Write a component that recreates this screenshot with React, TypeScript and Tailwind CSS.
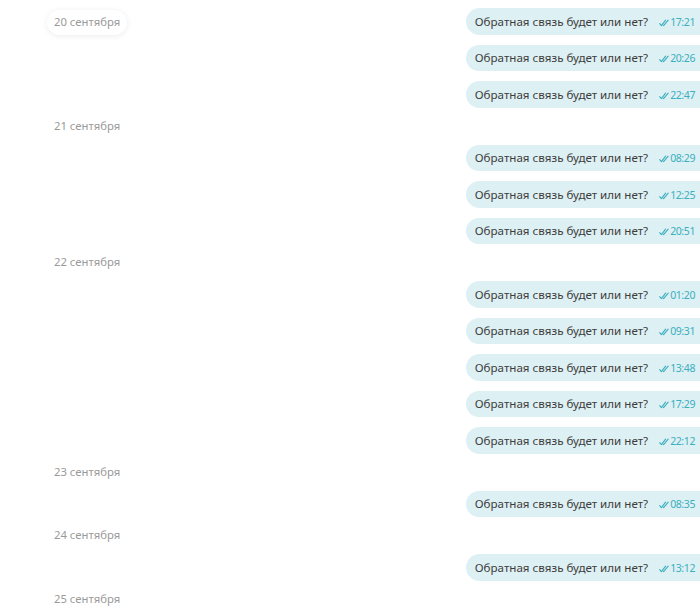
const days = [
  { date: "20 сентября", times: ["17:21", "20:26", "22:47"] },
  { date: "21 сентября", times: ["08:29", "12:25", "20:51"] },
  { date: "22 сентября", times: ["01:20", "09:31", "13:48", "17:29", "22:12"] },
  { date: "23 сентября", times: ["08:35"] },
  { date: "24 сентября", times: ["13:12"] },
  { date: "25 сентября", times: [] as string[] },
];

function Checks() {
  return (
    <svg width="10" height="8" viewBox="0 0 10 8" fill="none" className="shrink-0">
      <path d="M0.7 4.6 L2.4 6.6 L6.6 1.2" stroke="currentColor" strokeWidth="1.1" strokeLinecap="round" strokeLinejoin="round" />
      <path d="M4.3 6.4 L4.6 6.6 L9.2 1.2" stroke="currentColor" strokeWidth="1.1" strokeLinecap="round" strokeLinejoin="round" />
    </svg>
  );
}

function Message({ time }: { time: string }) {
  return (
    <div className="self-end flex items-center h-[26.5px] rounded-l-full bg-[#ddf0f3] pl-[9px] pr-[5px]">
      <span className="text-[11.6px] text-[#3d3d3d]">Обратная связь будет или нет?</span>
      <span className="ml-[11px] mt-[3px] flex items-center gap-[1px] text-[10.5px] text-[#3aafc0] tracking-[-0.4px]">
        <Checks />
        {time}
      </span>
    </div>
  );
}

export default function App() {
  return (
    <div className="relative w-[700px] h-[608px] overflow-hidden bg-white font-['Noto_Sans',sans-serif]">
      <div className="flex flex-col gap-[10px] pt-[8px]">
        {days.map((day, i) => (
          <div key={day.date} className="contents">
            {i > 0 && (
              <div className="h-[17px] flex items-center pl-[54px] text-[11.3px] text-[#9a9a9a]">{day.date}</div>
            )}
            {day.times.map((t) => (
              <Message key={t} time={t} />
            ))}
          </div>
        ))}
      </div>
      <div className="absolute left-[47px] top-[10px] h-[25px] px-[7px] flex items-center rounded-full bg-white shadow-[0_1px_6px_rgba(0,0,0,0.08)] text-[11.3px] text-[#9a9a9a]">
        20 сентября
      </div>
    </div>
  );
}
